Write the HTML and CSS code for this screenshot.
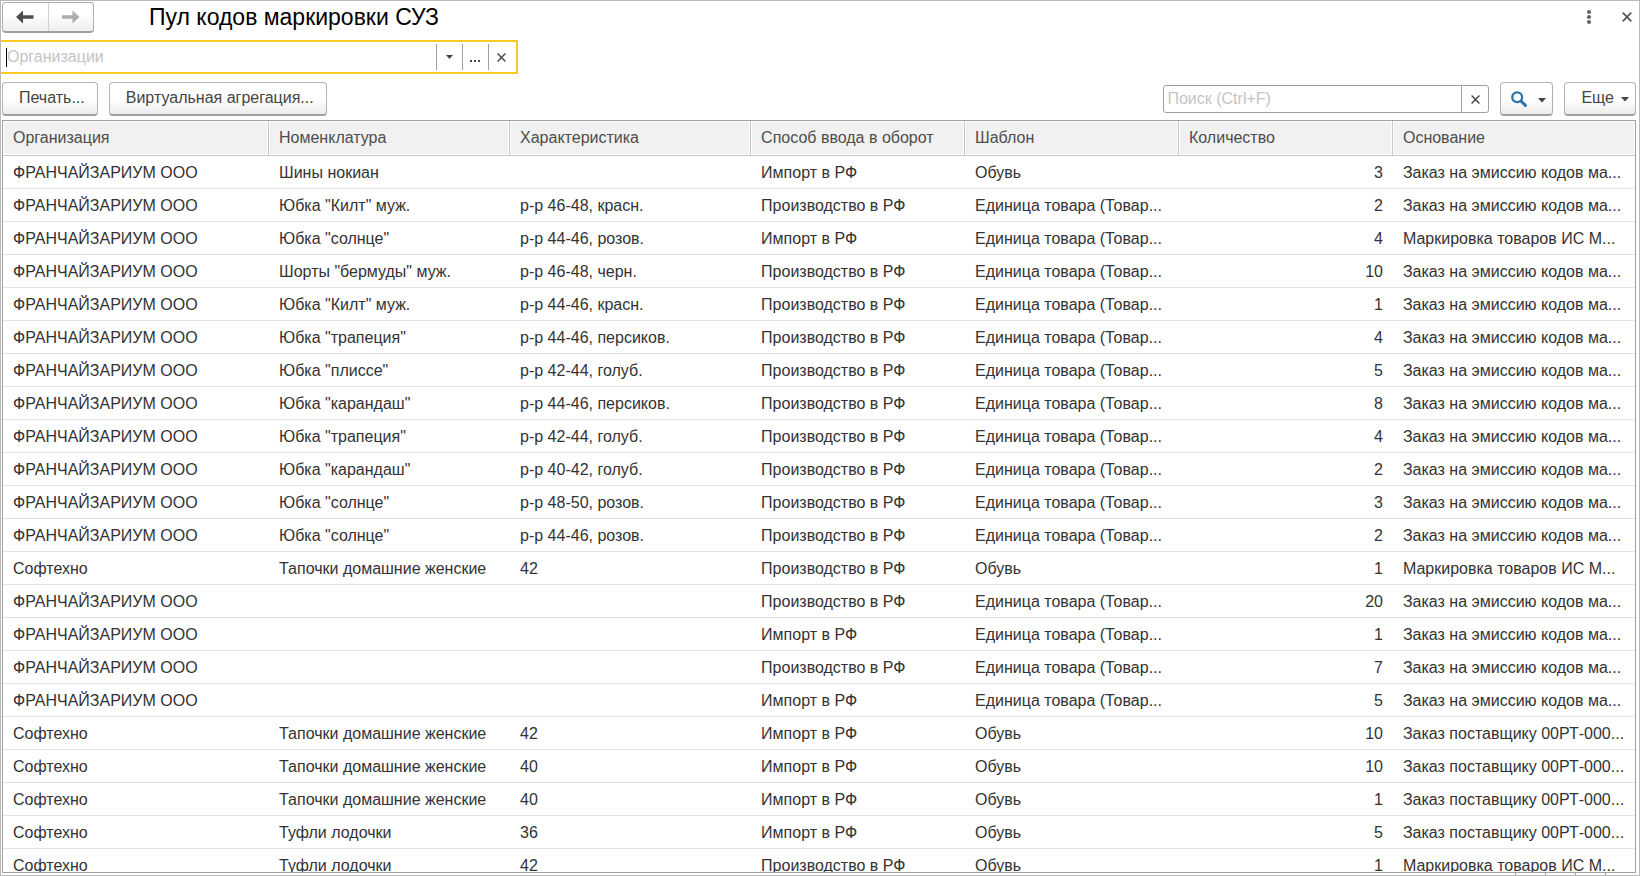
FILE: index.html
```html
<!DOCTYPE html>
<html lang="ru">
<head>
<meta charset="utf-8">
<title>Пул кодов маркировки СУЗ</title>
<link rel="stylesheet" href="styles.css">
</head>
<body>
<main class="window">
  <header class="titlebar">
    <div class="nav">
      <button class="nav-btn" type="button" aria-label="Назад"><svg width="18" height="14" viewBox="0 0 18 14"><path d="M0 7 7 .5V5.200H17.500V8.800H7V13.500Z" fill="#4d4d4d"/></svg></button>
      <button class="nav-btn" type="button" aria-label="Вперед"><svg width="18" height="14" viewBox="0 0 18 14"><path d="M17.500 7 10.500.5V5.200H0V8.800H10.500V13.500Z" fill="#adadad"/></svg></button>
    </div>
    <h1 class="title">Пул кодов маркировки СУЗ</h1>
    <button class="icon-btn" type="button" aria-label="Меню"><svg width="6" height="16" viewBox="0 0 6 16" fill="#666"><circle cx="3" cy="3" r="2.100"/><circle cx="3" cy="8" r="2.100"/><circle cx="3" cy="13" r="2.100"/></svg></button>
    <button class="icon-btn" type="button" aria-label="Закрыть"><svg width="10" height="10" viewBox="0 0 10 10"><path d="M.7.7l8.600 8.600M9.300.7L.7 9.300" stroke="#555" stroke-width="1.700"/></svg></button>
  </header>

  <div class="org">
    <span class="caret"></span>
    <input class="org-input" type="text" placeholder="Организации" aria-label="Организации">
    <button class="org-btn" type="button" aria-label="Список"><svg width="7" height="4" viewBox="0 0 7 4"><path d="M0 0h7L3.500 4z" fill="#444"/></svg></button>
    <button class="org-btn" type="button" aria-label="Выбрать"><svg width="11" height="12" viewBox="0 0 11 12" fill="#444"><path d="M0 9h2v2H0zM4 9h2v2H4zM8 9h2v2H8z"/></svg></button>
    <button class="org-btn" type="button" aria-label="Очистить"><svg width="9" height="9" viewBox="0 0 9 9"><path d="M.6.6l7.800 7.800M8.400.6L.6 8.400" stroke="#444" stroke-width="1.400"/></svg></button>
  </div>

  <div class="toolbar">
    <button class="btn" type="button">Печать...</button>
    <button class="btn" type="button">Виртуальная агрегация...</button>
    <div class="search">
      <input class="search-input" type="text" placeholder="Поиск (Ctrl+F)" aria-label="Поиск">
      <button class="search-clear" type="button" aria-label="Очистить поиск"><svg width="9" height="9" viewBox="0 0 9 9"><path d="M.6.6l7.800 7.800M8.400.6L.6 8.400" stroke="#444" stroke-width="1.400"/></svg></button>
    </div>
    <button class="btn btn-find" type="button" aria-label="Найти"><svg width="16" height="16" viewBox="0 0 16 16" fill="none" stroke="#2a72a8"><circle cx="6.200" cy="6.200" r="4.900" stroke-width="2.300"/><path d="M10 10l4.400 4.400" stroke-width="3" stroke-linecap="round"/></svg><svg class="arrow" width="8" height="5" viewBox="0 0 8 5"><path d="M0 0h8L4 4.500z" fill="#444"/></svg></button>
    <button class="btn btn-more" type="button">Еще<svg class="arrow" width="8" height="5" viewBox="0 0 8 5"><path d="M0 0h8L4 4.500z" fill="#444"/></svg></button>
  </div>

  <div class="list">
    <table class="grid">
      <colgroup><col class="c-org"><col class="c-item"><col class="c-item"><col class="c-mid"><col class="c-mid"><col class="c-mid"><col></colgroup>
      <thead><tr><th>Организация</th><th>Номенклатура</th><th>Характеристика</th><th>Способ ввода в оборот</th><th>Шаблон</th><th>Количество</th><th>Основание</th></tr></thead>
      <tbody>
        <tr><td>ФРАНЧАЙЗАРИУМ ООО</td><td>Шины нокиан</td><td></td><td>Импорт в РФ</td><td>Обувь</td><td class="num">3</td><td>Заказ на эмиссию кодов ма...</td></tr>
        <tr><td>ФРАНЧАЙЗАРИУМ ООО</td><td>Юбка "Килт" муж.</td><td>р-р 46-48, красн.</td><td>Производство в РФ</td><td>Единица товара (Товар...</td><td class="num">2</td><td>Заказ на эмиссию кодов ма...</td></tr>
        <tr><td>ФРАНЧАЙЗАРИУМ ООО</td><td>Юбка "солнце"</td><td>р-р 44-46, розов.</td><td>Импорт в РФ</td><td>Единица товара (Товар...</td><td class="num">4</td><td>Маркировка товаров ИС М...</td></tr>
        <tr><td>ФРАНЧАЙЗАРИУМ ООО</td><td>Шорты "бермуды" муж.</td><td>р-р 46-48, черн.</td><td>Производство в РФ</td><td>Единица товара (Товар...</td><td class="num">10</td><td>Заказ на эмиссию кодов ма...</td></tr>
        <tr><td>ФРАНЧАЙЗАРИУМ ООО</td><td>Юбка "Килт" муж.</td><td>р-р 44-46, красн.</td><td>Производство в РФ</td><td>Единица товара (Товар...</td><td class="num">1</td><td>Заказ на эмиссию кодов ма...</td></tr>
        <tr><td>ФРАНЧАЙЗАРИУМ ООО</td><td>Юбка "трапеция"</td><td>р-р 44-46, персиков.</td><td>Производство в РФ</td><td>Единица товара (Товар...</td><td class="num">4</td><td>Заказ на эмиссию кодов ма...</td></tr>
        <tr><td>ФРАНЧАЙЗАРИУМ ООО</td><td>Юбка "плиссе"</td><td>р-р 42-44, голуб.</td><td>Производство в РФ</td><td>Единица товара (Товар...</td><td class="num">5</td><td>Заказ на эмиссию кодов ма...</td></tr>
        <tr><td>ФРАНЧАЙЗАРИУМ ООО</td><td>Юбка "карандаш"</td><td>р-р 44-46, персиков.</td><td>Производство в РФ</td><td>Единица товара (Товар...</td><td class="num">8</td><td>Заказ на эмиссию кодов ма...</td></tr>
        <tr><td>ФРАНЧАЙЗАРИУМ ООО</td><td>Юбка "трапеция"</td><td>р-р 42-44, голуб.</td><td>Производство в РФ</td><td>Единица товара (Товар...</td><td class="num">4</td><td>Заказ на эмиссию кодов ма...</td></tr>
        <tr><td>ФРАНЧАЙЗАРИУМ ООО</td><td>Юбка "карандаш"</td><td>р-р 40-42, голуб.</td><td>Производство в РФ</td><td>Единица товара (Товар...</td><td class="num">2</td><td>Заказ на эмиссию кодов ма...</td></tr>
        <tr><td>ФРАНЧАЙЗАРИУМ ООО</td><td>Юбка "солнце"</td><td>р-р 48-50, розов.</td><td>Производство в РФ</td><td>Единица товара (Товар...</td><td class="num">3</td><td>Заказ на эмиссию кодов ма...</td></tr>
        <tr><td>ФРАНЧАЙЗАРИУМ ООО</td><td>Юбка "солнце"</td><td>р-р 44-46, розов.</td><td>Производство в РФ</td><td>Единица товара (Товар...</td><td class="num">2</td><td>Заказ на эмиссию кодов ма...</td></tr>
        <tr><td>Софтехно</td><td>Тапочки домашние женские</td><td>42</td><td>Производство в РФ</td><td>Обувь</td><td class="num">1</td><td>Маркировка товаров ИС М...</td></tr>
        <tr><td>ФРАНЧАЙЗАРИУМ ООО</td><td></td><td></td><td>Производство в РФ</td><td>Единица товара (Товар...</td><td class="num">20</td><td>Заказ на эмиссию кодов ма...</td></tr>
        <tr><td>ФРАНЧАЙЗАРИУМ ООО</td><td></td><td></td><td>Импорт в РФ</td><td>Единица товара (Товар...</td><td class="num">1</td><td>Заказ на эмиссию кодов ма...</td></tr>
        <tr><td>ФРАНЧАЙЗАРИУМ ООО</td><td></td><td></td><td>Производство в РФ</td><td>Единица товара (Товар...</td><td class="num">7</td><td>Заказ на эмиссию кодов ма...</td></tr>
        <tr><td>ФРАНЧАЙЗАРИУМ ООО</td><td></td><td></td><td>Импорт в РФ</td><td>Единица товара (Товар...</td><td class="num">5</td><td>Заказ на эмиссию кодов ма...</td></tr>
        <tr><td>Софтехно</td><td>Тапочки домашние женские</td><td>42</td><td>Импорт в РФ</td><td>Обувь</td><td class="num">10</td><td>Заказ поставщику 00РТ-000...</td></tr>
        <tr><td>Софтехно</td><td>Тапочки домашние женские</td><td>40</td><td>Импорт в РФ</td><td>Обувь</td><td class="num">10</td><td>Заказ поставщику 00РТ-000...</td></tr>
        <tr><td>Софтехно</td><td>Тапочки домашние женские</td><td>40</td><td>Импорт в РФ</td><td>Обувь</td><td class="num">1</td><td>Заказ поставщику 00РТ-000...</td></tr>
        <tr><td>Софтехно</td><td>Туфли лодочки</td><td>36</td><td>Импорт в РФ</td><td>Обувь</td><td class="num">5</td><td>Заказ поставщику 00РТ-000...</td></tr>
        <tr><td>Софтехно</td><td>Туфли лодочки</td><td>42</td><td>Производство в РФ</td><td>Обувь</td><td class="num">1</td><td>Маркировка товаров ИС М...</td></tr>
      </tbody>
    </table>
  </div>
  <div class="pager"><span></span><span></span><span></span><span></span></div>
</main>
</body>
</html>
```
FILE: styles.css
```css
* { box-sizing: border-box; }

body {
  margin: 0;
  background: #fff;
  color: #333;
  font: 16px/20px "Liberation Sans", Arial, sans-serif;
}

button, input { font: inherit; color: inherit; margin: 0; }
button { padding: 0; border: 0; background: none; }
input { min-width: 0; outline: 0; border: 0; background: none; }
input::placeholder { color: #c4c4c4; opacity: 1; }
svg { display: block; flex: none; }

.window {
  display: flex;
  flex-direction: column;
  height: 100vh;
  overflow: hidden;
  border: 1px solid #bababa;
}

.titlebar {
  display: flex;
  align-items: center;
  height: 31px;
  margin: 1px 7px 0 1px;
  padding-bottom: 2px;
}

.nav {
  display: flex;
  align-self: flex-start;
  width: 92px;
  height: 31px;
  border: 1px solid #b0b0b0;
  border-bottom: 2px solid #a0a0a0;
  border-radius: 4px;
  background: linear-gradient(#fff 40%, #eee);
}

.nav-btn {
  display: flex;
  flex: 1;
  align-items: center;
  justify-content: center;
}
.nav-btn + .nav-btn { border-left: 1px solid #d2d2d2; }

.title {
  flex: 1;
  margin: 0;
  padding-left: 55px;
  color: #000;
  font-size: 23px;
  font-weight: 400;
  line-height: 28px;
}

.icon-btn { margin-left: 30px; }

.org {
  display: flex;
  align-items: center;
  width: 517px;
  height: 34px;
  margin-top: 7px;
  padding: 0 2px 0 5px;
  border: 2px solid #fbca1f;
  border-left: 0;
}
.caret { width: 1px; height: 19px; background: #000; }
.org-input { flex: 1; padding: 0; }
.org-btn {
  display: flex;
  align-items: center;
  justify-content: center;
  width: 26px;
  height: 26px;
  border-left: 1px solid #a0a0a0;
}

.toolbar {
  display: flex;
  align-items: flex-start;
  gap: 11px;
  margin: 8px 3px 0 1px;
}

.btn {
  display: flex;
  align-items: center;
  height: 34px;
  padding: 0 12px 1px 16px;
  border: 1px solid #b4b4b4;
  border-bottom: 2px solid #a0a0a0;
  border-radius: 4px;
  background: linear-gradient(#fff 50%, #ececec);
  color: #444;
}
.btn-find { gap: 11px; padding: 0 6px 0 10px; }
.btn-more { gap: 7px; padding-right: 6px; }
.arrow { margin-top: 3px; }

.search {
  display: flex;
  width: 326px;
  height: 28px;
  margin: 0 0 0 auto;
  align-self: center;
  border: 1px solid #a0a0a0;
  border-radius: 3px;
}
.search-input { flex: 1; padding: 0 3px; }
.search-clear {
  display: flex;
  align-items: center;
  justify-content: center;
  width: 27px;
  border-left: 1px solid #a0a0a0;
}

.list {
  flex: 1;
  min-height: 0;
  margin: 4px 3px 0 1px;
  overflow: hidden;
  border: 1px solid #a0a0a0;
}

.grid {
  width: 100%;
  table-layout: fixed;
  border-spacing: 0;
}
.c-org { width: 16.3%; }
.c-item { width: 14.77%; }
.c-mid { width: 13.11%; }

.grid th, .grid td {
  height: 33px;
  padding: 1px 10px 0;
  overflow: hidden;
  border-bottom: 1px solid #e2e2e2;
  text-align: left;
  white-space: nowrap;
}
.grid th {
  height: 35px;
  padding-top: 0;
  border-right: 1px solid #c8c8c8;
  border-bottom-color: #c8c8c8;
  background: #f1f1f1;
  box-shadow: inset 0 0 0 1px #fff;
  color: #4d4d4d;
  font-weight: 400;
}
.grid th:last-child { border-right: 0; }
.grid .num { text-align: right; }

.pager {
  display: flex;
  justify-content: flex-end;
  height: 2px;
  margin-right: 4px;
}
.pager span { width: 30px; border-left: 1px solid #a0a0a0; }
```
